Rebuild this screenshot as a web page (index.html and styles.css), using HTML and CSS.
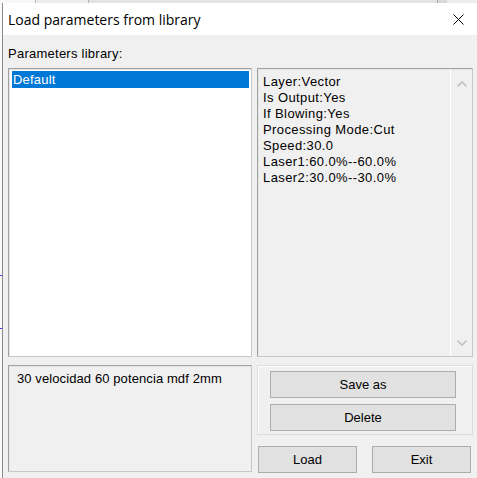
FILE: index.html
```html
<!DOCTYPE html>
<html>
<head>
<meta charset="utf-8">
<link rel="stylesheet" href="styles.css">
</head>
<body>
<div class="screen">
  <div class="topstrip"></div>
  <div class="mainrow">
    <div class="leftstrip"></div>
    <div class="dialog">
      <div class="titlebar">
        <span class="title">Load parameters from library</span>
        <svg class="close" width="11" height="11" viewBox="0 0 11 11"><path d="M0.5 0.5 L10.5 10.5 M10.5 0.5 L0.5 10.5" stroke="#000" stroke-width="1" fill="none"/></svg>
      </div>
      <div class="content">
        <div class="label">Parameters library:</div>
        <div class="grid">
          <div class="listbox sunken">
            <div class="item selected">Default</div>
          </div>
          <div class="infobox sunken">
            <div class="infotext">
              <div>Layer:Vector</div>
              <div>Is Output:Yes</div>
              <div>If Blowing:Yes</div>
              <div>Processing Mode:Cut</div>
              <div>Speed:30.0</div>
              <div>Laser1:60.0%--60.0%</div>
              <div>Laser2:30.0%--30.0%</div>
            </div>
            <div class="scrollbar">
              <svg width="10" height="6" viewBox="0 0 10 6"><path d="M0.5 5.5 L5 1 L9.5 5.5" stroke="#c2c2c2" stroke-width="1.6" fill="none"/></svg>
              <svg width="10" height="6" viewBox="0 0 10 6"><path d="M0.5 0.5 L5 5 L9.5 0.5" stroke="#c2c2c2" stroke-width="1.6" fill="none"/></svg>
            </div>
          </div>
          <div class="notebox sunken">30 velocidad 60 potencia mdf 2mm</div>
          <div class="rightbottom">
            <div class="group">
              <button class="btn wide">Save as</button>
              <button class="btn wide">Delete</button>
            </div>
            <div class="btnrow">
              <button class="btn half">Load</button>
              <button class="btn half">Exit</button>
            </div>
          </div>
        </div>
      </div>
    </div>
  </div>
</div>
</body>
</html>
```

FILE: styles.css
```css
html, body {
  margin: 0;
  padding: 0;
}
body {
  width: 477px;
  height: 478px;
  overflow: hidden;
  background: #f0f0f0;
  font-family: "Liberation Sans", Arial, sans-serif;
  font-size: 13px;
  color: #000;
}
.screen {
  width: 477px;
  height: 478px;
  display: flex;
  flex-direction: column;
}
.topstrip {
  height: 3px;
  flex: none;
  background:
    linear-gradient(to right,
      #f7f7f7 0, #f7f7f7 35px, #b5b5b5 35px, #b5b5b5 36px,
      #ececec 36px, #ececec 88px, #b5b5b5 88px, #b5b5b5 89px,
      #e3e3e3 89px, #e3e3e3 437px, #a8a8a8 437px, #a8a8a8 438px,
      #d8d8d8 438px, #d8d8d8 447px, #ededed 447px);
}
.mainrow {
  flex: 1;
  display: flex;
}
.leftstrip {
  width: 2px;
  flex: none;
  background:
    linear-gradient(to bottom,
      #fafafa 0, #fafafa 272px, #3c3cf0 272px, #3c3cf0 273px,
      #fafafa 273px, #fafafa 325px, #3c3cf0 325px, #3c3cf0 326px,
      #fafafa 326px);
}
.dialog {
  flex: 1;
  display: flex;
  flex-direction: column;
  border-left: 1px solid #8a8a8a;
}
.titlebar {
  height: 32px;
  flex: none;
  background: #fff;
  display: flex;
  align-items: center;
  justify-content: space-between;
  padding-left: 5px;
  padding-right: 13px;
}
.title {
  font-family: "Open Sans", "Liberation Sans", sans-serif;
  font-size: 14px;
  color: #000;
}
.close {
  display: block;
}
.content {
  flex: 1;
  padding: 11px 4px 0 5px;
}
.label {
  height: 16px;
  line-height: 16px;
  margin-bottom: 6px;
  letter-spacing: 0.25px;
}
.grid {
  display: grid;
  grid-template-columns: 244px 216px;
  grid-template-rows: 289px 113px;
  column-gap: 5px;
  row-gap: 8px;
}
.sunken {
  box-sizing: border-box;
  border: 1px solid #a0a0a0;
  border-right-color: #c8c8c8;
  border-bottom-color: #c8c8c8;
  box-shadow: inset 1px 1px 0 #e6e6e6;
}
.listbox {
  background: #fff;
  padding: 2px 2px 0 3px;
}
.item {
  height: 17px;
  line-height: 17px;
  padding-left: 1px;
  letter-spacing: 0.2px;
}
.selected {
  background: #0078d7;
  color: #fff;
}
.infobox {
  background: #f0f0f0;
  display: flex;
}
.infotext {
  flex: 1;
  padding: 5px 0 0 5px;
  line-height: 16px;
  letter-spacing: 0.4px;
}
.scrollbar {
  width: 22px;
  flex: none;
  border-left: 1px solid #fff;
  display: flex;
  flex-direction: column;
  justify-content: space-between;
  align-items: center;
  padding: 12px 0 10px 1px;
  box-sizing: border-box;
}
.scrollbar svg {
  display: block;
}
.notebox {
  height: 107px;
  background: #f0f0f0;
  padding: 5px 0 0 8px;
  line-height: 16px;
  letter-spacing: 0.1px;
}
.rightbottom {
  display: flex;
  flex-direction: column;
}
.group {
  box-sizing: border-box;
  height: 70px;
  border: 1px solid #dcdcdc;
  box-shadow: inset 1px 1px 0 #fff;
  display: flex;
  flex-direction: column;
  gap: 6px;
  padding: 5px 0 0 12px;
}
.btn {
  box-sizing: border-box;
  height: 27px;
  background: #e1e1e1;
  border: 1px solid #adadad;
  font-family: "Liberation Sans", Arial, sans-serif;
  font-size: 13px;
  color: #000;
  padding: 0;
  margin: 0;
}
.wide {
  width: 186px;
}
.btnrow {
  display: flex;
  gap: 15px;
  margin-top: 11px;
  padding-left: 1px;
}
.half {
  width: 99px;
}
```
